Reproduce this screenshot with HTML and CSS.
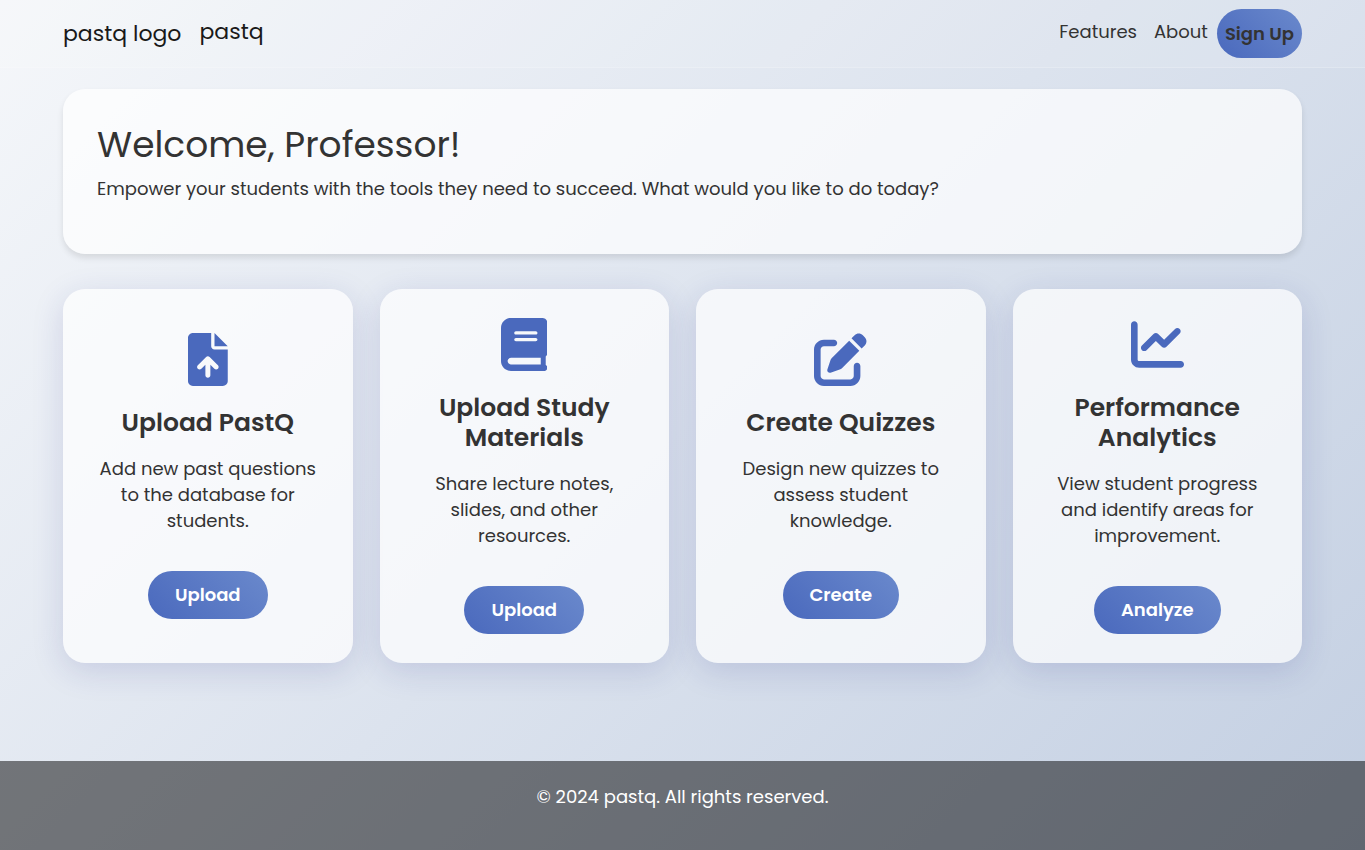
FILE: index.html
```html
<!DOCTYPE html>
<html lang="en">
<head>
<meta charset="utf-8">
<meta name="viewport" content="width=device-width, initial-scale=1">
<title>pastq</title>
<link rel="stylesheet" href="styles.css">
</head>
<body>
<header class="navbar">
  <a class="brand" href="#"><span class="brand-logo">pastq logo</span><span class="brand-name">pastq</span></a>
  <nav class="nav-links">
    <a class="nav-link" href="#">Features</a>
    <a class="nav-link" href="#">About</a>
    <a class="btn btn-signup" href="#">Sign Up</a>
  </nav>
</header>
<main class="main">
  <section class="welcome">
    <h1 class="welcome-title">Welcome, Professor!</h1>
    <p class="welcome-text">Empower your students with the tools they need to succeed. What would you like to do today?</p>
  </section>
  <section class="cards">
    <article class="card">
      <svg class="icon" viewBox="0 0 384 512" aria-hidden="true"><path d="M256 0v128h128L256 0zM224 128L224 0H48C21.49 0 0 21.49 0 48v416C0 490.5 21.49 512 48 512h288c26.51 0 48-21.49 48-48V160h-128C238.3 160 224 145.7 224 128zM288.97 344.97C284.3 349.7 278.2 352 272 352s-12.28-2.344-16.97-7.031L216 305.9V408c0 13.25-10.75 24-24 24s-24-10.75-24-24V305.9l-39.03 39.03c-9.375 9.375-24.56 9.375-33.94 0s-9.375-24.56 0-33.94l80-80c9.375-9.375 24.56-9.375 33.94 0l80 80C298.3 320.4 298.3 335.6 288.97 344.97z"/></svg>
      <h2 class="card-title">Upload PastQ</h2>
      <p class="card-text">Add new past questions to the database for students.</p>
      <button class="btn" type="button">Upload</button>
    </article>
    <article class="card">
      <svg class="icon" viewBox="0 0 448 512" aria-hidden="true"><path d="M448 336v-288C448 21.49 426.5 0 400 0H96C42.98 0 0 42.98 0 96v320c0 53.02 42.98 96 96 96h320c17.67 0 32-14.33 32-32c0-11.72-6.607-21.52-16-27.1v-81.36C441.8 362.8 448 350.2 448 336zM144 128h192C344.8 128 352 135.2 352 144C352 152.8 344.8 160 336 160H144C135.2 160 128 152.8 128 144C128 135.2 135.2 128 144 128zM144 192h192C344.8 192 352 199.2 352 208C352 216.8 344.8 224 336 224H144C135.2 224 128 216.8 128 208C128 199.2 135.2 192 144 192zM384 448H96c-17.67 0-32-14.33-32-32c0-17.67 14.33-32 32-32h288V448z"/></svg>
      <h2 class="card-title">Upload Study Materials</h2>
      <p class="card-text">Share lecture notes, slides, and other resources.</p>
      <button class="btn" type="button">Upload</button>
    </article>
    <article class="card">
      <svg class="icon" viewBox="0 0 512 512" aria-hidden="true"><path d="M490.3 40.4C512.2 62.27 512.2 97.73 490.3 119.6L460.3 149.7L362.3 51.72L392.4 21.66C414.3-.2135 449.7-.2135 471.6 21.66L490.3 40.4zM172.4 241.7L339.7 74.34L437.7 172.3L270.3 339.6C264.2 345.8 256.7 350.4 248.4 353.2L159.6 382.8C150.1 385.6 141.5 383.4 135 377C128.6 370.5 126.4 361 129.2 352.4L158.8 263.6C161.6 255.3 166.2 247.8 172.4 241.7zM192 64C209.7 64 224 78.33 224 96C224 113.7 209.7 128 192 128H96C78.33 128 64 142.3 64 160V416C64 433.7 78.33 448 96 448H352C369.7 448 384 433.7 384 416V320C384 302.3 398.3 288 416 288C433.7 288 448 302.3 448 320V416C448 469 405 512 352 512H96C42.98 512 0 469 0 416V160C0 106.1 42.98 64 96 64H192z"/></svg>
      <h2 class="card-title">Create Quizzes</h2>
      <p class="card-text">Design new quizzes to assess student knowledge.</p>
      <button class="btn" type="button">Create</button>
    </article>
    <article class="card">
      <svg class="icon" viewBox="0 0 512 512" aria-hidden="true"><path d="M64 400C64 408.8 71.16 416 80 416H480C497.7 416 512 430.3 512 448C512 465.7 497.7 480 480 480H80C35.82 480 0 444.2 0 400V64C0 46.33 14.33 32 32 32C49.67 32 64 46.33 64 64V400zM342.6 278.6C330.1 291.1 309.9 291.1 297.4 278.6L240 221.3L150.6 310.6C138.1 323.1 117.9 323.1 105.4 310.6C92.88 298.1 92.88 277.9 105.4 265.4L217.4 153.4C229.9 140.9 250.1 140.9 262.6 153.4L320 210.7L425.4 105.4C437.9 92.88 458.1 92.88 470.6 105.4C483.1 117.9 483.1 138.1 470.6 150.6L342.6 278.6z"/></svg>
      <h2 class="card-title">Performance Analytics</h2>
      <p class="card-text">View student progress and identify areas for improvement.</p>
      <button class="btn" type="button">Analyze</button>
    </article>
  </section>
</main>
<footer class="footer">
  <p class="footer-text">© 2024 pastq. All rights reserved.</p>
</footer>
</body>
</html>
```
FILE: styles.css
```css
* {
  box-sizing: border-box;
  margin: 0;
}

body {
  display: flex;
  flex-direction: column;
  min-height: 100vh;
  background: linear-gradient(135deg, #f5f7fa, #c3cfe2);
  color: #333;
  font-family: Poppins, Inter, sans-serif;
  font-size: 18px;
  line-height: 26px;
}

.navbar {
  display: flex;
  flex-wrap: wrap;
  align-items: center;
  justify-content: space-between;
  padding: 9px 63px;
  background: rgba(255, 255, 255, 0.1);
  border-bottom: 1px solid rgba(255, 255, 255, 0.2);
}

.brand {
  display: flex;
  align-items: center;
  gap: 18px;
  color: #191919;
  font-size: 22px;
  line-height: 34px;
  text-decoration: none;
}

.brand-name {
  padding-bottom: 4px;
}

.nav-links {
  display: flex;
  align-items: center;
}

.nav-link {
  padding: 0 9px 4px;
  color: #333;
  text-decoration: none;
}

.nav-link + .nav-link {
  padding-left: 8px;
}

.btn {
  padding: 11px 27px;
  border: 0;
  border-radius: 26px;
  background: linear-gradient(45deg, #4a69bd, #6a89cc);
  color: #fff;
  font: inherit;
  font-weight: 600;
  text-align: center;
  text-decoration: none;
}

.btn-signup {
  padding: 12px 8px 11px;
  color: #333;
}

.main {
  flex: 1;
  padding: 21px 63px 35px;
}

.welcome {
  margin-bottom: 35px;
  padding: 34px 34px 52px;
  border-radius: 22px;
  background: rgba(255, 255, 255, 0.7);
  box-shadow: 0 4px 6px rgba(0, 0, 0, 0.1);
}

.welcome-title {
  margin-bottom: 9px;
  font-size: 36px;
  font-weight: 400;
  line-height: 44px;
}

.cards {
  display: grid;
  grid-template-columns: repeat(4, 1fr);
  gap: 27px;
}

.card {
  display: flex;
  flex-direction: column;
  align-items: center;
  justify-content: center;
  padding: 29px 28px;
  border-radius: 22px;
  background: rgba(255, 255, 255, 0.7);
  box-shadow: 0 8px 32px rgba(31, 38, 135, 0.15);
  text-align: center;
}

.icon {
  height: 53px;
  margin-bottom: 22px;
  fill: #4a69bd;
}

.card-title {
  margin-bottom: 18px;
  font-size: 25px;
  font-weight: 600;
  line-height: 30px;
}

.card-text {
  margin-bottom: 37px;
}

.footer {
  padding: 23px 63px 40px;
  background: rgba(0, 0, 0, 0.5);
  color: #fff;
  text-align: center;
}

@media (max-width: 1100px) {
  .cards {
    grid-template-columns: repeat(2, 1fr);
  }
}

@media (max-width: 600px) {
  .navbar,
  .main {
    padding-left: 20px;
    padding-right: 20px;
  }

  .cards {
    grid-template-columns: 1fr;
  }
}
```
